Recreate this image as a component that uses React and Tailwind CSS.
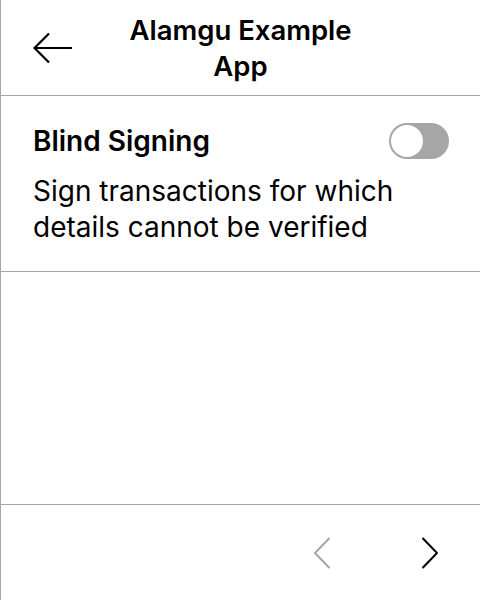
export default function App() {
  return (
    <div className="w-[480px] h-[600px] bg-white border-l border-[#a6a6a6] flex flex-col text-black" style={{ fontFamily: 'Inter, "Noto Sans", sans-serif' }}>
      <header className="h-[96px] border-b border-[#a6a6a6] flex items-center shrink-0">
        <div className="w-[110px] flex justify-start pl-[32px] shrink-0">
          <svg width="40" height="32" viewBox="0 0 40 32" fill="none" stroke="black" strokeWidth="2.2">
            <path d="M1.5 16 H39" />
            <path d="M16 1.5 L1.5 16 L16 30.5" />
          </svg>
        </div>
        <h1 className="flex-1 text-center text-[27.5px] font-semibold leading-[36px]">
          Alamgu Example App
        </h1>
        <div className="w-[110px] shrink-0" />
      </header>

      <section className="border-b border-[#a6a6a6] pl-[32px] pr-[31px] pt-[27px] pb-[26px]">
        <div className="flex items-center justify-between">
          <h2 className="text-[28px] font-semibold leading-[36px]">Blind Signing</h2>
          <div className="w-[60px] h-[36px] rounded-full bg-[#a6a6a6] p-[2px] flex items-center">
            <div className="w-[32px] h-[32px] rounded-full bg-white" />
          </div>
        </div>
        <p className="mt-[14px] text-[28px] leading-[36px] font-normal">
          Sign transactions for which details cannot be verified
        </p>
      </section>

      <div className="flex-1" />

      <footer className="h-[96px] border-t border-[#a6a6a6] flex items-center justify-end shrink-0 pr-[40px] gap-[88px]">
        <svg width="20" height="32" viewBox="0 0 20 32" fill="none" stroke="#a6a6a6" strokeWidth="2" strokeLinecap="round" strokeLinejoin="round">
          <path d="M17 1.5 L3 16 L17 30.5" />
        </svg>
        <svg width="20" height="32" viewBox="0 0 20 32" fill="none" stroke="black" strokeWidth="2" strokeLinecap="round" strokeLinejoin="round">
          <path d="M3 1.5 L17 16 L3 30.5" />
        </svg>
      </footer>
    </div>
  )
}
